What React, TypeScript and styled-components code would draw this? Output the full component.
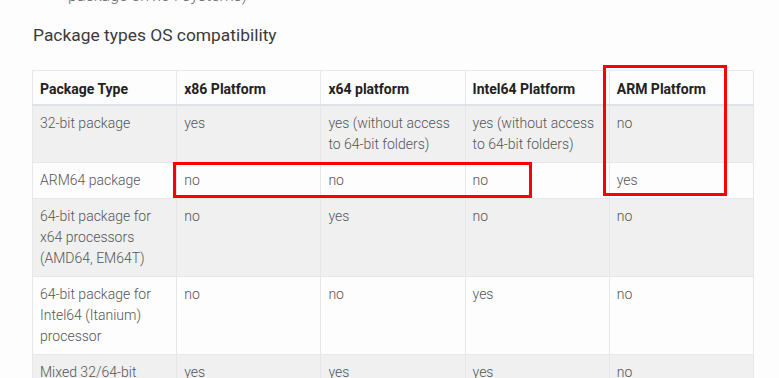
import React from 'react';
import styled, { createGlobalStyle } from 'styled-components';

type Row = {
    type: string;
    values: string[];
};

const rows: Row[] = [
    {
        type: '32-bit package',
        values: ['yes', 'yes (without access to 64-bit folders)', 'yes (without access to 64-bit folders)', 'no'],
    },
    { type: 'ARM64 package', values: ['no', 'no', 'no', 'yes'] },
    { type: '64-bit package for x64 processors (AMD64, EM64T)', values: ['no', 'yes', 'no', 'no'] },
    { type: '64-bit package for Intel64 (Itanium) processor', values: ['no', 'no', 'yes', 'no'] },
    { type: 'Mixed 32/64-bit package', values: ['yes', 'yes', 'yes', 'no'] },
];

const headers = ['Package Type', 'x86 Platform', 'x64 platform', 'Intel64 Platform', 'ARM Platform'];

const GlobalStyle = createGlobalStyle`
    html, body {
        margin: 0;
        background: #fdfdfd;
        overflow: hidden;
    }
    body {
        font-family: Roboto, "Liberation Sans", sans-serif;
    }
`;

const Page = styled.div`
    padding: 0 25px 0 32px;
    height: 378px;
    overflow: hidden;
`;

const CutText = styled.p`
    margin: -15px 0 0 36px;
    font-size: 16px;
    line-height: 22px;
    font-weight: 300;
    color: #666;
`;

const Title = styled.h3`
    margin: 17px 0 24px 1px;
    font-size: 17.4px;
    line-height: 22px;
    font-weight: 400;
    color: #3a3a3a;
`;

const TableWrap = styled.div`
    position: relative;
    width: 722px;
`;

const Table = styled.table`
    width: 722px;
    border-collapse: collapse;
    table-layout: fixed;
    border: 1px solid #e6e8eb;
    font-size: 14px;
    line-height: 21px;
`;

const HeadCell = styled.th`
    text-align: left;
    vertical-align: top;
    padding: 8px 7px 4px;
    font-weight: 700;
    color: #222;
    background: #fdfdfd;
    border-right: 1px solid #e8e9eb;
    border-bottom: 2px solid #dfe2e7;
`;

const BodyRow = styled.tr<{ $shaded: boolean }>`
    background: ${(p) => (p.$shaded ? '#f0f0f0' : '#fdfdfd')};
`;

const Cell = styled.td`
    vertical-align: top;
    padding: 7px 7px;
    font-weight: 300;
    color: #555;
    border-right: 1px solid #e6e7e9;
    border-bottom: 1px solid #e6e8eb;
`;

const Highlight = styled.div<{ $left: number; $top: number; $width: number; $height: number }>`
    position: absolute;
    left: ${(p) => p.$left}px;
    top: ${(p) => p.$top}px;
    width: ${(p) => p.$width}px;
    height: ${(p) => p.$height}px;
    box-sizing: border-box;
    border: 3px solid #ff0000;
    pointer-events: none;
`;

const App: React.FC = () => {
  return (
    <Page>
      <GlobalStyle />
      <CutText>package on x64 systems)</CutText>
      <Title>Package types OS compatibility</Title>
      <TableWrap>
        <Table>
          <thead>
            <tr>
              {headers.map((h) => (
                <HeadCell key={h}>{h}</HeadCell>
              ))}
            </tr>
          </thead>
          <tbody>
            {rows.map((row, i) => (
              <BodyRow key={row.type} $shaded={i % 2 === 0}>
                <Cell>{row.type}</Cell>
                {row.values.map((v, j) => (
                  <Cell key={j}>{v}</Cell>
                ))}
              </BodyRow>
            ))}
          </tbody>
        </Table>
        <Highlight $left={141} $top={92} $width={359} $height={36} />
        <Highlight $left={571} $top={-5} $width={124} $height={131} />
      </TableWrap>
    </Page>
  );
};

export default App;
